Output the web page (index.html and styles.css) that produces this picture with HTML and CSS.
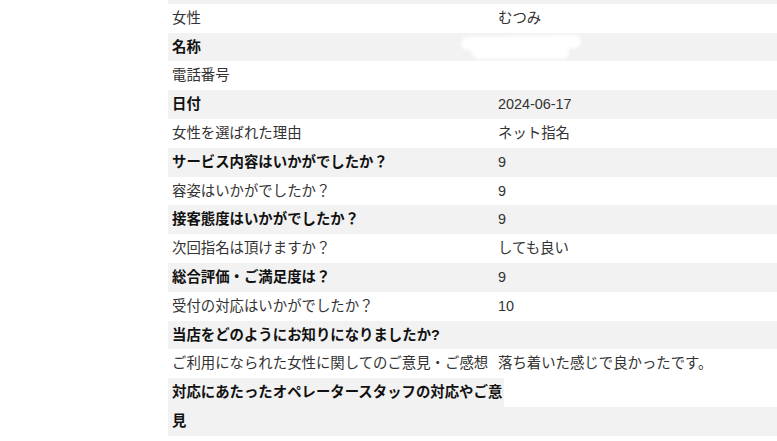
FILE: index.html
```html
<!DOCTYPE html>
<html lang="ja">
<head>
<meta charset="utf-8">
<title>アンケート</title>
<link rel="stylesheet" href="styles.css">
</head>
<body>
<div class="sheet">
  <div class="row alt"><div class="label"></div><div class="value"></div></div>
  <div class="row"><div class="label">女性</div><div class="value">むつみ</div></div>
  <div class="row alt"><div class="label strong">名称</div><div class="value masked"><span class="mask mask-a"></span><span class="mask mask-b"></span></div></div>
  <div class="row"><div class="label">電話番号</div><div class="value"></div></div>
  <div class="row alt"><div class="label strong">日付</div><div class="value">2024-06-17</div></div>
  <div class="row"><div class="label">女性を選ばれた理由</div><div class="value">ネット指名</div></div>
  <div class="row alt"><div class="label strong">サービス内容はいかがでしたか？</div><div class="value">9</div></div>
  <div class="row"><div class="label">容姿はいかがでしたか？</div><div class="value">9</div></div>
  <div class="row alt"><div class="label strong">接客態度はいかがでしたか？</div><div class="value">9</div></div>
  <div class="row"><div class="label">次回指名は頂けますか？</div><div class="value">しても良い</div></div>
  <div class="row alt"><div class="label strong">総合評価・ご満足度は？</div><div class="value">9</div></div>
  <div class="row"><div class="label">受付の対応はいかがでしたか？</div><div class="value">10</div></div>
  <div class="row alt"><div class="label strong">当店をどのようにお知りになりましたか?</div><div class="value"></div></div>
  <div class="row"><div class="label">ご利用になられた女性に関してのご意見・ご感想</div><div class="value">落ち着いた感じで良かったです。</div></div>
  <div class="row alt tall"><div class="label strong">対応にあたったオペレータースタッフの対応やご意見</div><div class="value blank"></div></div>
</div>
</body>
</html>
```

FILE: styles.css
```css
html, body {
  margin: 0;
  padding: 0;
  background: #ffffff;
  overflow: hidden;
}

body {
  font-family: "Liberation Sans", "Noto Sans CJK JP", sans-serif;
  font-size: 14.4px;
  line-height: 28.8px;
  color: #333333;
}

.sheet {
  margin: -25px 0 0 168px;
}

.row {
  display: grid;
  grid-template-columns: 325px 1fr;
  background: #ffffff;
}

.row.alt {
  background: #f2f2f2;
}

.label {
  padding: 0 0 0 4px;
  min-height: 28.8px;
  white-space: nowrap;
}

.label.strong {
  font-weight: bold;
  color: #111111;
}

.value {
  padding: 0 0 0 5px;
  min-height: 28.8px;
  white-space: nowrap;
}

.row.tall {
  grid-template-columns: 336px 1fr;
  grid-template-rows: 28.8px 28.8px;
}

.row.tall .label {
  grid-row: 1 / span 2;
  white-space: normal;
}

.row.tall .value.blank {
  background: #ffffff;
}

.masked {
  position: relative;
}

.mask {
  position: absolute;
  background: #ffffff;
  border-radius: 8px;
  filter: blur(1.6px);
}

.mask-a {
  left: -32px;
  top: 3px;
  width: 120px;
  height: 13px;
  transform: rotate(-1deg);
}

.mask-b {
  left: -22px;
  top: 12px;
  width: 98px;
  height: 14px;
  border-radius: 6px 3px 8px 10px;
}
```
